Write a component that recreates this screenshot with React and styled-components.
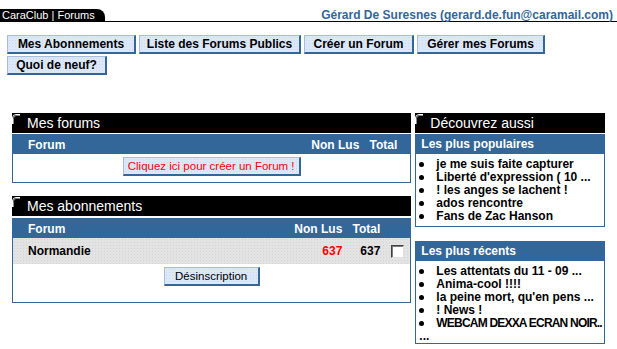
import styled, { createGlobalStyle } from "styled-components";

const GlobalStyle = createGlobalStyle`
  html, body {
    margin: 0;
    padding: 0;
    background: #fff;
  }
  body {
    font-family: "Liberation Sans", Arial, sans-serif;
    font-size: 12px;
    color: #000;
  }
  * { box-sizing: border-box; }
`;

const BLUE = "#336699";

const Page = styled.div`
  width: 617px;
  padding-top: 9px;
`;

const TopBar = styled.div`
  display: flex;
  justify-content: space-between;
  align-items: flex-end;
  border-bottom: 1px solid #000;
  padding-right: 4px;
`;

const Tab = styled.div`
  width: 105px;
  height: 12px;
  line-height: 12px;
  padding-left: 2px;
  background: #000;
  color: #fff;
  font-size: 11px;
  border-top-right-radius: 8px;
`;

const UserName = styled.div`
  font-size: 12px;
  line-height: 12px;
  font-weight: bold;
  color: ${BLUE};
`;

const Nav = styled.nav`
  display: flex;
  flex-wrap: wrap;
  gap: 2px 3px;
  padding: 13px 0 0 7px;
`;

const NavButton = styled.a`
  display: flex;
  align-items: center;
  justify-content: center;
  width: ${(p) => p.$w}px;
  height: 19px;
  border-style: solid;
  border-width: 1px 2px 2px 1px;
  border-color: #a6bde0 ${BLUE} ${BLUE} #a6bde0;
  background-color: #dce8f8;
  background-image: radial-gradient(#c9d9f1 0.6px, transparent 0.7px);
  background-size: 3px 3px;
  font-weight: bold;
  font-size: 12px;
  color: #000;
  white-space: nowrap;
  cursor: pointer;
`;

const Main = styled.div`
  display: flex;
  gap: 4px;
  padding: 38px 12px 0 12px;
`;

const Column = styled.div`
  display: flex;
  flex-direction: column;
  width: ${(p) => p.$w}px;
`;

const BlackBar = styled.div`
  display: flex;
  align-items: center;
  height: 20px;
  background: #000;
  color: #fff;
  font-size: 14px;
  margin-top: ${(p) => p.$top || 0}px;
  svg {
    align-self: flex-start;
    margin-top: 1px;
    flex: none;
  }
`;

const BarTitle = styled.span`
  margin-left: 7px;
`;

const Box = styled.div`
  border: 1px solid ${BLUE};
  margin-top: ${(p) => p.$top || 1}px;
`;

const Grid = styled.div`
  display: grid;
  grid-template-columns: ${(p) => p.$cols};
  align-items: center;
  padding: 0 ${(p) => p.$pr}px 0 15px;
  font-weight: bold;
  font-size: 12px;
  & > *:not(:first-child) {
    justify-self: end;
  }
`;

const HeadRow = styled(Grid)`
  height: 19px;
  background: ${BLUE};
  color: #fff;
`;

const DataRow = styled(Grid)`
  height: 26px;
  background-color: #e3e3e3;
  background-image: radial-gradient(#d3d3d3 0.6px, transparent 0.7px);
  background-size: 3px 3px;
`;

const Count = styled.span`
  color: ${(p) => (p.$unread ? "#ff0000" : "#000")};
`;

const Check = styled.input`
  appearance: none;
  width: 13px;
  height: 13px;
  margin: 0;
  background: #fff;
  border-style: solid;
  border-width: 1px;
  border-color: #404040 #e0e0e0 #e0e0e0 #404040;
  box-shadow: inset 1px 1px 0 #808080;
`;

const Body = styled.div`
  display: flex;
  justify-content: center;
  padding: ${(p) => p.$pad};
`;

const ActionButton = styled.a`
  display: flex;
  align-items: center;
  justify-content: center;
  width: ${(p) => p.$w}px;
  height: 19px;
  border-style: solid;
  border-width: 1px 2px 2px 1px;
  border-color: #a6bde0 ${BLUE} ${BLUE} #a6bde0;
  background-color: #dce8f8;
  background-image: radial-gradient(#c9d9f1 0.6px, transparent 0.7px);
  background-size: 3px 3px;
  font-size: 11.5px;
  color: ${(p) => p.$color || "#000"};
  white-space: nowrap;
  cursor: pointer;
`;

const SideHead = styled.div`
  height: 19px;
  line-height: 19px;
  background: ${BLUE};
  color: #fff;
  font-weight: bold;
  font-size: 12px;
  padding-left: 5px;
`;

const List = styled.ul`
  list-style: none;
  margin: 0;
  padding: ${(p) => p.$pad};
`;

const Item = styled.li`
  position: relative;
  padding-left: 20px;
  line-height: 13px;
  font-weight: bold;
  font-size: 12px;
  white-space: nowrap;
  letter-spacing: ${(p) => (p.$tight ? "-0.8px" : "normal")};
  &::before {
    content: "";
    position: absolute;
    left: 3px;
    top: 4px;
    width: 5px;
    height: 5px;
    border-radius: 50%;
    background: #000;
  }
`;

const More = styled.div`
  padding-left: 3px;
  line-height: 13px;
  font-weight: bold;
  font-size: 12px;
`;

const Corner = () => (
  <svg width="8" height="10" viewBox="0 0 8 10">
    <path d="M0.5 10 V4 Q0.5 0.5 4 0.5 H8" fill="none" stroke="#ffffff" strokeWidth="1" />
    <path d="M1.5 10 V4.5 Q1.5 1.5 4.5 1.5 H8" fill="none" stroke="#8a8a8a" strokeWidth="1" />
  </svg>
);

const Panel = ({ title, top, children }) => (
  <>
    <BlackBar $top={top}>
      <Corner />
      <BarTitle>{title}</BarTitle>
    </BlackBar>
    {children}
  </>
);

const populaires = [
  "je me suis faite capturer",
  "Liberté d'expression ( 10 ...",
  "! les anges se lachent !",
  "ados rencontre",
  "Fans de Zac Hanson",
];

const recents = [
  "Les attentats du 11 - 09 ...",
  "Anima-cool !!!!",
  "la peine mort, qu'en pens ...",
  "! News !",
  "WEBCAM DEXXA ECRAN NOIR..",
];

export default function App() {
  return (
    <Page>
      <GlobalStyle />
      <TopBar>
        <Tab>CaraClub | Forums</Tab>
        <UserName>Gérard De Suresnes (gerard.de.fun@caramail.com)</UserName>
      </TopBar>

      <Nav>
        <NavButton $w={129}>Mes Abonnements</NavButton>
        <NavButton $w={162}>Liste des Forums Publics</NavButton>
        <NavButton $w={110}>Créer un Forum</NavButton>
        <NavButton $w={128}>Gérer mes Forums</NavButton>
        <NavButton $w={100}>Quoi de neuf?</NavButton>
      </Nav>

      <Main>
        <Column $w={400}>
          <Panel title="Mes forums">
            <Box>
              <HeadRow $cols="1fr 50px 38px" $pr={13}>
                <span>Forum</span>
                <span>Non Lus</span>
                <span>Total</span>
              </HeadRow>
              <Body $pad="3px 0 6px">
                <ActionButton $w={178} $color="#ff0000">
                  Cliquez ici pour créer un Forum !
                </ActionButton>
              </Body>
            </Box>
          </Panel>

          <Panel title="Mes abonnements" top={13}>
            <Box $top={2}>
              <HeadRow $cols="1fr 50px 38px 24px" $pr={6}>
                <span>Forum</span>
                <span>Non Lus</span>
                <span>Total</span>
                <span />
              </HeadRow>
              <DataRow $cols="1fr 50px 38px 24px" $pr={6}>
                <span>Normandie</span>
                <Count $unread>637</Count>
                <Count>637</Count>
                <Check type="checkbox" />
              </DataRow>
              <Body $pad="3px 0 16px">
                <ActionButton $w={96}>Désinscription</ActionButton>
              </Body>
            </Box>
          </Panel>
        </Column>

        <Column $w={190}>
          <Panel title="Découvrez aussi">
            <Box>
              <SideHead>Les plus populaires</SideHead>
              <List $pad="4px 0 3px">
                {populaires.map((t) => (
                  <Item key={t}>{t}</Item>
                ))}
              </List>
            </Box>
            <Box $top={14}>
              <SideHead>Les plus récents</SideHead>
              <List $pad="4px 0 0">
                {recents.map((t) => (
                  <Item key={t} $tight={t.startsWith("WEBCAM")}>
                    {t}
                  </Item>
                ))}
              </List>
              <More>...</More>
            </Box>
          </Panel>
        </Column>
      </Main>
    </Page>
  );
}
